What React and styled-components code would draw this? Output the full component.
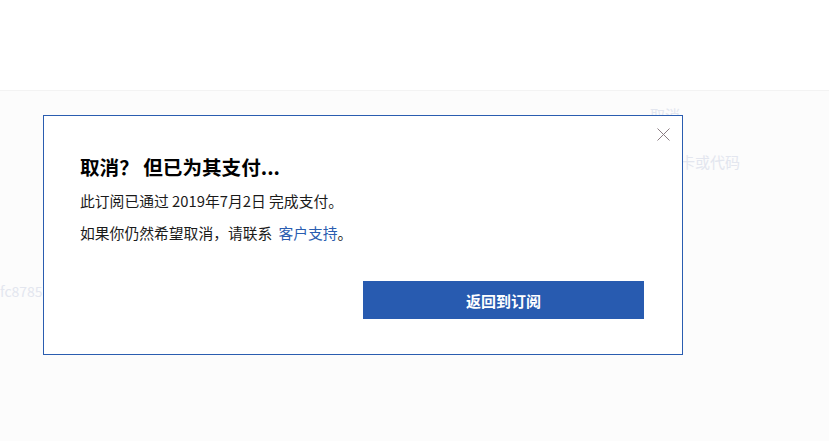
import React from "react";
import styled, { createGlobalStyle } from "styled-components";

const Global = createGlobalStyle`
  html, body { margin: 0; padding: 0; }
  body {
    font-family: "Noto Sans CJK SC", "Noto Sans", sans-serif;
    background: #fcfcfc;
  }
`;

const Page = styled.div`
  position: relative;
  min-height: 100vh;
  background: #fcfcfc;
  overflow: hidden;
`;

const Header = styled.header`
  height: 90px;
  background: #ffffff;
  border-bottom: 1px solid #f3f3f3;
`;

const Main = styled.main`
  display: grid;
  grid-template-columns: 1fr auto;
`;

const LeftCol = styled.div`
  padding-top: 190px;
`;

const RightCol = styled.div`
  display: flex;
  flex-direction: column;
  align-items: flex-start;
  width: 179px;
  padding-top: 14px;
`;

const Faded = styled.div`
  font-size: ${(p) => p.$size || 15}px;
  line-height: 20px;
  color: #e3e6ef;
  white-space: nowrap;
  margin-top: ${(p) => p.$mt || 0}px;
  margin-left: ${(p) => p.$ml || 0}px;
`;

const Overlay = styled.div`
  position: absolute;
  inset: 0;
  display: flex;
  align-items: flex-start;
  justify-content: flex-start;
  padding: 115px 0 0 43px;
`;

const Dialog = styled.div`
  position: relative;
  box-sizing: border-box;
  width: 640px;
  height: 240px;
  background: #ffffff;
  border: 1px solid #2a5db0;
  padding: 38px 38px 0 36px;
  display: flex;
  flex-direction: column;
`;

const CloseButton = styled.button`
  position: absolute;
  top: 10px;
  right: 11px;
  width: 16px;
  height: 16px;
  padding: 0;
  border: 0;
  background: transparent;
  display: flex;
  align-items: center;
  justify-content: center;
  cursor: pointer;
`;

const Title = styled.h2`
  margin: 0;
  font-size: 19.6px;
  line-height: 26px;
  font-weight: 700;
  color: #000000;
`;

const Text = styled.p`
  margin: ${(p) => p.$mt || 0}px 0 0;
  font-size: 14.8px;
  line-height: 22px;
  color: #1a1a1a;
`;

const Link = styled.a`
  color: #2a5db0;
  text-decoration: none;
  margin-left: 6px;
`;

const Footer = styled.div`
  display: flex;
  justify-content: flex-end;
  margin-top: 37px;
`;

const PrimaryButton = styled.button`
  width: 281px;
  height: 38px;
  border: 0;
  background: #285bb0;
  color: #ffffff;
  font-family: inherit;
  font-size: 15px;
  font-weight: 700;
  cursor: pointer;
`;

export default function App() {
  return (
    <>
      <Global />
      <Page>
        <Header />
        <Main>
          <LeftCol>
            <Faded $size={14}>fc8785</Faded>
          </LeftCol>
          <RightCol>
            <Faded>取消</Faded>
            <Faded $mt={27} $ml={-30}>兑换礼品卡或代码</Faded>
          </RightCol>
        </Main>
        <Overlay>
          <Dialog role="dialog">
            <CloseButton aria-label="关闭">
              <svg width="13" height="13" viewBox="0 0 13 13">
                <path d="M0.5 0.5 L12.5 12.5 M12.5 0.5 L0.5 12.5" stroke="#8a7c82" strokeWidth="1" fill="none" />
              </svg>
            </CloseButton>
            <Title>取消？ 但已为其支付...</Title>
            <Text $mt={10}>此订阅已通过 2019年7月2日 完成支付。</Text>
            <Text $mt={10}>
              如果你仍然希望取消，请联系<Link href="#">客户支持</Link>。
            </Text>
            <Footer>
              <PrimaryButton>返回到订阅</PrimaryButton>
            </Footer>
          </Dialog>
        </Overlay>
      </Page>
    </>
  );
}
